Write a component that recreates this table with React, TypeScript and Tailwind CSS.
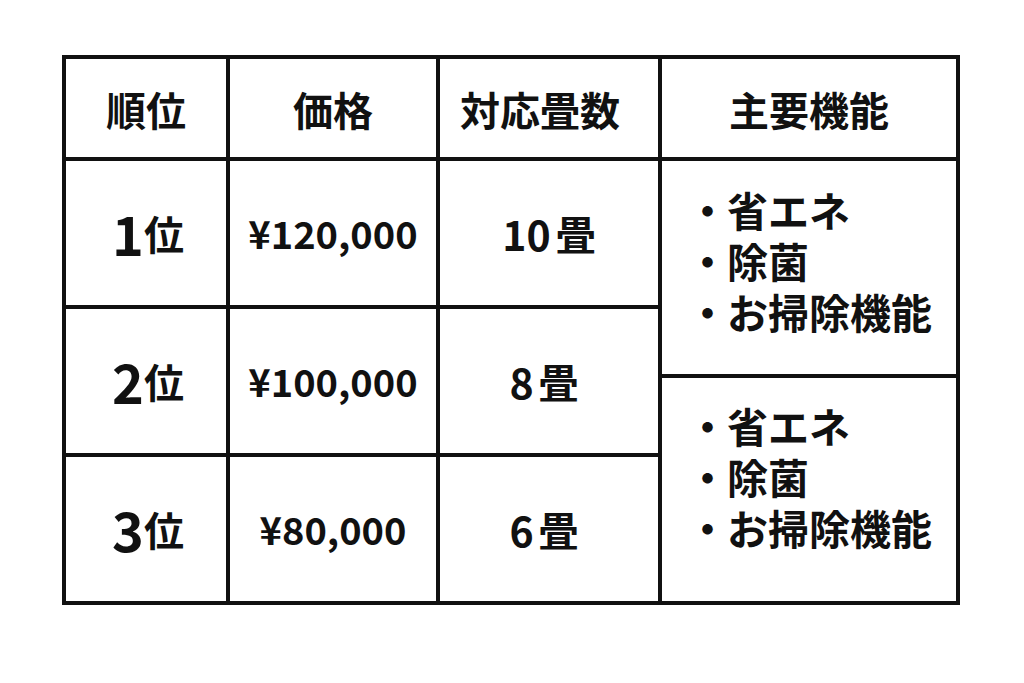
import React from "react";

const font = { fontFamily: '"Noto Sans CJK JP", "Noto Sans", sans-serif' };

const rows = [
  { rank: "1", price: "¥120,000", size: "10", pr: "pr-0" },
  { rank: "2", price: "¥100,000", size: "8", pr: "pr-[10px]" },
  { rank: "3", price: "¥80,000", size: "6", pr: "pr-[10px]" },
];

const features = ["省エネ", "除菌", "お掃除機能"];

function FeatureList() {
  return (
    <div className="flex flex-col text-[41px] font-bold leading-[51px] text-[#111]">
      {features.map((f) => (
        <div key={f} className="flex">
          <span className="-mr-[1px]">・</span>
          <span>{f}</span>
        </div>
      ))}
    </div>
  );
}

const headers = [
  { t: "順位", c: "" },
  { t: "価格", c: "" },
  { t: "対応畳数", c: "pr-[18px]" },
  { t: "主要機能", c: "" },
];

export default function App() {
  return (
    <div className="w-[1024px] h-[683px] bg-white pl-[62px] pt-[55px]" style={font}>
      <div className="grid w-fit bg-[#111] p-[4px] gap-[4px] grid-cols-[160px_206px_218px_294px] grid-rows-[98px_144px_144px_144px]">
        {headers.map((h) => (
          <div
            key={h.t}
            className={`bg-white flex items-center justify-center pt-[2px] text-[40px] font-bold text-[#111] leading-none ${h.c}`}
          >
            {h.t}
          </div>
        ))}
        {rows.map((r, i) => (
          <React.Fragment key={r.rank}>
            <div className="bg-white flex items-center justify-center pl-[4px] text-[#111] font-bold leading-none">
              <span className="text-[54px]">{r.rank}</span>
              <span className="text-[40px]">位</span>
            </div>
            <div className="bg-white flex items-center justify-center text-[38px] font-semibold text-[#111] leading-none">
              {r.price}
            </div>
            <div className={`bg-white flex items-center justify-center text-[#111] font-bold leading-none ${r.pr}`}>
              <span className="text-[41px] mr-[5px]">{r.size}</span>
              <span className="text-[40px]">畳</span>
            </div>
            {i === 0 && (
              <div className="row-span-3 flex flex-col gap-[4px]">
                <div className="h-[213px] bg-white flex items-center pl-[25px] pb-[14px]">
                  <FeatureList />
                </div>
                <div className="flex-1 bg-white flex items-center pl-[25px] pb-[27px]">
                  <FeatureList />
                </div>
              </div>
            )}
          </React.Fragment>
        ))}
      </div>
    </div>
  );
}
